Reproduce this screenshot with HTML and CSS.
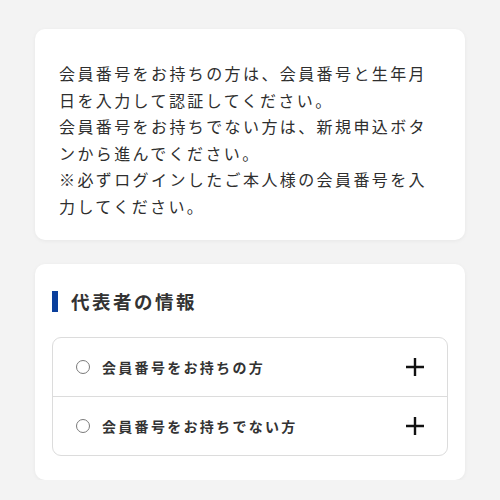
FILE: index.html
```html
<!DOCTYPE html>
<html lang="ja">
<head>
<meta charset="utf-8">
<title>会員認証</title>
<link rel="stylesheet" href="styles.css">
</head>
<body>
<main class="page">
  <section class="card notice">
    <p class="notice-text">会員番号をお持ちの方は、会員番号と生年月日を入力して認証してください。<br>会員番号をお持ちでない方は、新規申込ボタンから進んでください。<br>※必ずログインしたご本人様の会員番号を入力してください。</p>
  </section>
  <section class="card rep">
    <h2 class="rep-title"><span class="rep-bar"></span>代表者の情報</h2>
    <div class="accordion">
      <div class="acc-row">
        <span class="radio"></span>
        <span class="acc-label">会員番号をお持ちの方</span>
        <svg class="plus" width="18" height="18" viewBox="0 0 18 18"><path d="M9 0V18M0 9H18" stroke="#111" stroke-width="2.4" fill="none"/></svg>
      </div>
      <div class="acc-row acc-row-next">
        <span class="radio"></span>
        <span class="acc-label">会員番号をお持ちでない方</span>
        <svg class="plus" width="18" height="18" viewBox="0 0 18 18"><path d="M9 0V18M0 9H18" stroke="#111" stroke-width="2.4" fill="none"/></svg>
      </div>
    </div>
  </section>
</main>
</body>
</html>
```
FILE: styles.css
```css
html, body {
  margin: 0;
  padding: 0;
  background: #f3f3f3;
}
body {
  font-family: "Noto Sans CJK JP", "Noto Sans", sans-serif;
  color: #333;
}
.page {
  padding: 29px 35px 0;
  display: flex;
  flex-direction: column;
  gap: 24px;
}
.card {
  background: #fff;
  border-radius: 10px;
  box-shadow: 0 1px 4px rgba(0, 0, 0, 0.05);
}
.notice {
  padding: 31px 24px 21px;
}
.notice-text {
  margin: 0;
  font-size: 16px;
  line-height: 26.5px;
  letter-spacing: 0.15em;
  color: #2e2e2e;
}
.rep {
  padding: 27px 17px 24px;
}
.rep-title {
  margin: 0;
  display: flex;
  align-items: center;
  gap: 13px;
  font-size: 18.5px;
  font-weight: bold;
  line-height: 21px;
  letter-spacing: 2.5px;
  color: #333;
}
.rep-bar {
  width: 6px;
  height: 21px;
  background: #0a3f9c;
  flex: none;
}
.accordion {
  margin-top: 25px;
  border: 1px solid #dcdcdc;
  border-radius: 9px;
}
.acc-row {
  height: 58px;
  display: flex;
  align-items: center;
  padding: 0 23px 0 23px;
}
.acc-row-next {
  border-top: 1px solid #dcdcdc;
}
.radio {
  width: 12px;
  height: 12px;
  border: 1.5px solid #7a7a7a;
  border-radius: 50%;
  flex: none;
}
.acc-label {
  margin-left: 12px;
  font-size: 14px;
  font-weight: bold;
  letter-spacing: 2.3px;
  color: #333;
  flex: 1;
}
.plus {
  flex: none;
}
```
